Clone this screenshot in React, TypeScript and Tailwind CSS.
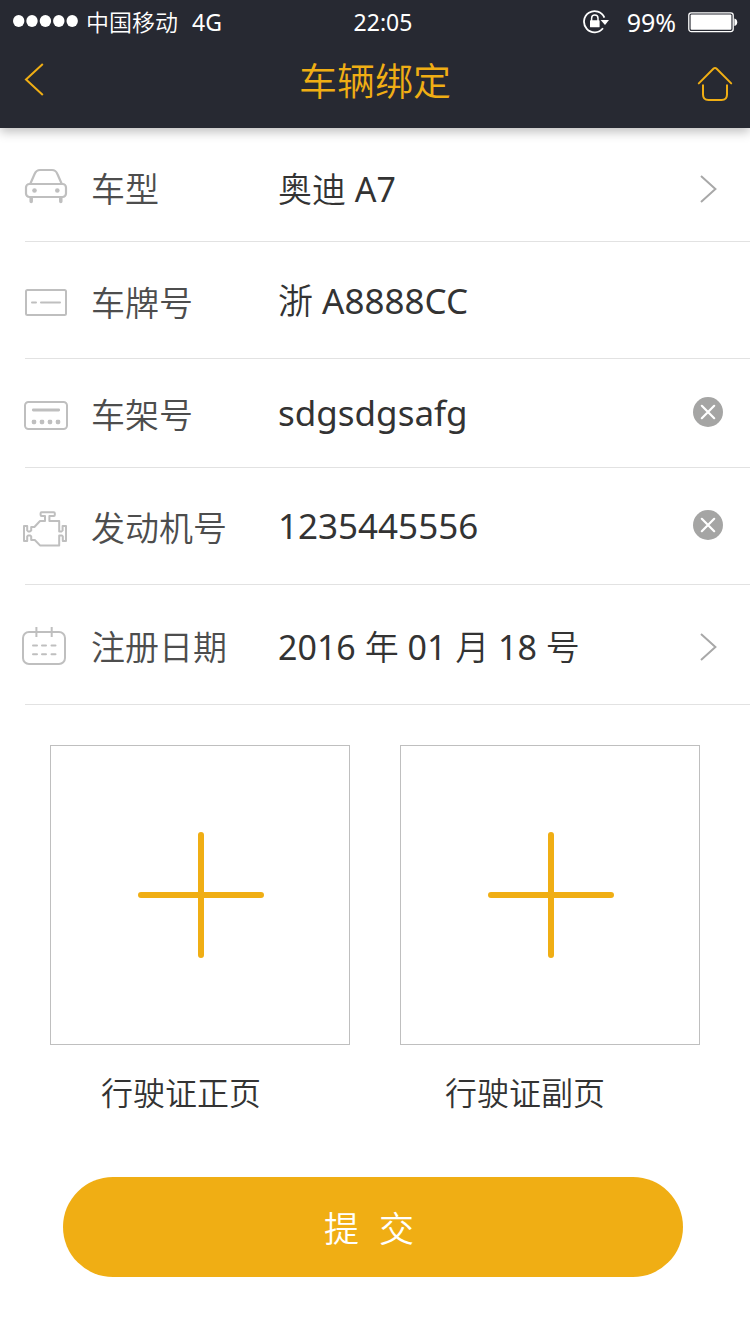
import { useState } from "react";
import type { ReactNode } from "react";

const iconClass = "h-10 w-11 shrink-0 overflow-visible fill-none stroke-[#bfbfbf] stroke-2";

function CarIcon() {
  return (
    <svg viewBox="0 0 44 40" className={iconClass} aria-hidden="true">
      <path d="M5 15.5 L9.6 5 Q11.3 1 15 1 H27 Q30.8 1 32.4 5 L37 15.5" className="stroke-[2.2]" />
      <rect x="1" y="15" width="40" height="13" rx="3.5" className="stroke-[2.2]" />
      <circle cx="9.5" cy="21.5" r="2.3" className="fill-[#bfbfbf] stroke-none" />
      <circle cx="32.3" cy="21.5" r="2.3" className="fill-[#bfbfbf] stroke-none" />
      <path d="M6.2 29 V32.6 M35.8 29 V32.6" strokeLinecap="round" className="stroke-[3.5]" />
    </svg>
  );
}

function PlateIcon() {
  return (
    <svg viewBox="0 0 44 40" className={iconClass} aria-hidden="true">
      <rect x="1" y="7" width="40" height="25" rx="1.5" />
      <path d="M7 19.5 H11 M16 19.5 H35" strokeLinecap="round" />
    </svg>
  );
}

function FrameIcon() {
  return (
    <svg viewBox="0 0 44 40" className={iconClass} aria-hidden="true">
      <rect x="0" y="7" width="42" height="27" rx="3.5" />
      <path d="M8.3 15 H33.7" strokeLinecap="round" className="stroke-[2.8]" />
      <g className="fill-[#bfbfbf] stroke-none">
        <rect x="6.8" y="24.8" width="4.4" height="4.4" rx="1.4" />
        <rect x="14.8" y="24.8" width="4.4" height="4.4" rx="1.4" />
        <rect x="22.8" y="24.8" width="4.4" height="4.4" rx="1.4" />
        <rect x="30.8" y="24.8" width="4.4" height="4.4" rx="1.4" />
      </g>
    </svg>
  );
}

function EngineIcon() {
  return (
    <svg viewBox="0 0 44 40" className={iconClass} aria-hidden="true">
      <path
        strokeLinejoin="round"
        d="M20 13 V8 H16.5 Q15.6 8 15.6 7 V5.3 Q15.6 4.3 16.5 4.3 H28.8 Q29.8 4.3 29.8 5.3 V7 Q29.8 8 28.8 8 H24.4 V13 H34.2 V23.6 H36.4 L37.6 22.4 V18 H41 V33 H37.8 V28.4 L36.8 27.4 H34.2 V37.4 H15 L9.8 32 H6.2 V28.4 L5.2 27.4 H3.2 L2.2 28.4 V33 H-1 V18 H2.2 V22.4 L3.4 23.6 H4.8 L6.2 22.4 V19 H9.4 L15 13 Z"
      />
    </svg>
  );
}

function CalendarIcon() {
  return (
    <svg viewBox="0 0 44 40" className={iconClass} aria-hidden="true">
      <rect x="-2" y="5" width="42" height="32" rx="6" />
      <path d="M11.4 0 V10 M26.7 0 V10" />
      <path
        strokeLinecap="round"
        d="M8 18.6 H12 M17 18.6 H21 M26.5 18.6 H30.5 M8 27.3 H12 M17 27.3 H21 M26.5 27.3 H30.5"
      />
    </svg>
  );
}

function Chevron() {
  return (
    <svg viewBox="0 0 30 30" className="size-[30px] shrink-0 fill-none stroke-[#a8a8a8] stroke-2" aria-hidden="true">
      <path d="M8 2 L22.4 15 L8 28" />
    </svg>
  );
}

function StatusBar() {
  return (
    <div className="flex h-10 items-center pt-1 pr-3 pl-3 text-[23px] leading-8">
      <div className="flex flex-1 items-center">
        <svg viewBox="0 0 68 14" className="h-3.5 w-17 fill-white" aria-hidden="true">
          <ellipse cx="6.7" cy="6" rx="5.7" ry="6" />
          <ellipse cx="20" cy="6" rx="5.7" ry="6" />
          <ellipse cx="33.4" cy="6" rx="5.7" ry="6" />
          <ellipse cx="46.8" cy="6" rx="5.7" ry="6" />
          <ellipse cx="60.2" cy="6" rx="5.7" ry="6" />
        </svg>
        <span className="ml-1.5">中国移动</span>
        <span className="ml-3.5">4G</span>
      </div>
      <span className="pl-4">22:05</span>
      <div className="flex flex-1 items-center justify-end">
        <svg viewBox="0 0 26 24" className="h-6 w-[26px] fill-none stroke-white" aria-hidden="true">
          <path d="M21.4 7.6 A10.6 10.6 0 1 0 20 18.2" strokeWidth="1.8" />
          <path d="M17.6 10 H26 L22 15 Z" className="fill-white stroke-none" />
          <rect x="7" y="10.3" width="9.6" height="7" rx="0.6" className="fill-white stroke-none" />
          <path d="M8.6 11 V8.2 A3.2 3.2 0 0 1 15 8.2 V11" strokeWidth="1.5" />
        </svg>
        <span className="ml-[18px] text-[25px] leading-8">99%</span>
        <svg viewBox="0 0 50 22" className="ml-3 h-[22px] w-[50px] fill-none stroke-white" aria-hidden="true">
          <rect x="0.8" y="1.8" width="44.4" height="18.8" rx="2.5" strokeWidth="1.3" />
          <rect x="2.6" y="3.6" width="40.8" height="15.2" rx="1" className="fill-white stroke-none" />
          <path d="M46.4 7.4 Q49.2 8 49.2 11.2 Q49.2 14.4 46.4 15 Z" className="fill-white stroke-none" />
        </svg>
      </div>
    </div>
  );
}

type RowProps = {
  icon: ReactNode;
  label: string;
  htmlFor: string;
  size: string;
  children: ReactNode;
};

function Row({ icon, label, htmlFor, size, children }: RowProps) {
  return (
    <li className={`ml-[25px] flex items-center border-b border-[#e2e2e2] pr-[27px] ${size}`}>
      {icon}
      <label htmlFor={htmlFor} className="ml-[22px] w-[187px] shrink-0 text-[34px] leading-10 text-[#4d4d4d]">
        {label}
      </label>
      {children}
    </li>
  );
}

function PickerValue({ id, value }: { id: string; value: string }) {
  return (
    <button id={id} type="button" className="flex min-w-0 flex-1 items-center justify-between text-left text-[34px] leading-10 text-[#333]">
      <span>{value}</span>
      <Chevron />
    </button>
  );
}

type TextValueProps = {
  id: string;
  value: string;
  clearable?: boolean;
  onChange: (value: string) => void;
};

function TextValue({ id, value, clearable, onChange }: TextValueProps) {
  return (
    <>
      <input
        id={id}
        type="text"
        value={value}
        onChange={(event) => onChange(event.target.value)}
        className="h-[52px] min-w-0 flex-1 bg-transparent pb-1 text-[35px] text-[#333] outline-none"
      />
      {clearable && (
        <button type="button" aria-label="清除" onClick={() => onChange("")} className="mb-1.5 shrink-0">
          <svg viewBox="0 0 30 30" className="size-[30px] fill-none" aria-hidden="true">
            <circle cx="15" cy="15" r="15" className="fill-[#a5a5a4]" />
            <path d="M8.8 8.8 L21.2 21.2 M21.2 8.8 L8.8 21.2" strokeLinecap="round" className="stroke-white stroke-[2.2]" />
          </svg>
        </button>
      )}
    </>
  );
}

function UploadTile({ label, indent }: { label: string; indent: string }) {
  return (
    <div>
      <button type="button" aria-label={label} className="flex aspect-square w-full items-center justify-center border border-[#bfbfbf] pl-0.5">
        <svg viewBox="0 0 126 126" className="size-[126px] fill-none stroke-[#f0ae14] stroke-6" aria-hidden="true">
          <path d="M63 3 V123 M3 63 H123" strokeLinecap="round" />
        </svg>
      </button>
      <p className={`mt-7 text-[32px] leading-10 whitespace-nowrap text-[#333] ${indent}`}>{label}</p>
    </div>
  );
}

export default function App() {
  const [plate, setPlate] = useState("浙 A8888CC");
  const [frame, setFrame] = useState("sdgsdgsafg");
  const [engine, setEngine] = useState("1235445556");

  return (
    <div className="min-h-screen bg-white font-['Noto_Sans','Noto_Sans_CJK_SC_DemiLight','Noto_Sans_CJK_SC',sans-serif]">
      <header className="relative bg-[#272932] pb-2 text-white shadow-[0_4px_10px_rgba(0,0,0,0.25)]">
        <StatusBar />
        <div className="flex h-20 items-center justify-between pr-[17px] pl-6">
          <a href="#back" aria-label="返回" className="flex w-[29px]">
            <svg viewBox="0 0 20 34" className="h-[34px] w-5 fill-none stroke-[#f0ae14] stroke-2" aria-hidden="true">
              <path d="M18.8 1 L2 16.5 L18.8 32" />
            </svg>
          </a>
          <h1 className="text-[38px] leading-[48px] font-normal text-[#f0ae14]">车辆绑定</h1>
          <a href="#home" aria-label="首页" className="flex w-9 pt-2">
            <svg viewBox="0 0 36 36" className="size-9 fill-none stroke-[#f0ae14] stroke-2" aria-hidden="true">
              <path d="M1.8 17.4 L16.6 2.6 Q18 1.4 19.4 2.6 L34.2 17.4" strokeLinecap="round" />
              <path d="M6 18.5 V28.5 Q6 34 11.5 34 H24.5 Q30 34 30 28.5 V18.5" />
            </svg>
          </a>
        </div>
      </header>

      <form onSubmit={(event) => event.preventDefault()}>
        <ul>
          <Row icon={<CarIcon />} label="车型" htmlFor="model" size="h-[114px] pt-2">
            <PickerValue id="model" value="奥迪 A7" />
          </Row>
          <Row icon={<PlateIcon />} label="车牌号" htmlFor="plate" size="h-[117px] pt-1.5">
            <TextValue id="plate" value={plate} onChange={setPlate} />
          </Row>
          <Row icon={<FrameIcon />} label="车架号" htmlFor="frame" size="h-[109px] pt-1">
            <TextValue id="frame" value={frame} clearable onChange={setFrame} />
          </Row>
          <Row icon={<EngineIcon />} label="发动机号" htmlFor="engine" size="h-[117px] pt-1">
            <TextValue id="engine" value={engine} clearable onChange={setEngine} />
          </Row>
          <Row icon={<CalendarIcon />} label="注册日期" htmlFor="date" size="h-[120px] pt-1">
            <PickerValue id="date" value="2016 年 01 月 18 号" />
          </Row>
        </ul>

        <div className="grid grid-cols-2 gap-[50px] px-[50px] pt-10">
          <UploadTile label="行驶证正页" indent="pl-[51px]" />
          <UploadTile label="行驶证副页" indent="pl-[45px]" />
        </div>

        <div className="pt-16 pr-[67px] pb-14 pl-[63px]">
          <button type="submit" className="flex h-[100px] w-full items-center justify-center gap-5 rounded-full bg-[#f0ae14] pt-1 pr-2 text-[35px] leading-10 text-white">
            <span>提</span>
            <span>交</span>
          </button>
        </div>
      </form>
    </div>
  );
}
